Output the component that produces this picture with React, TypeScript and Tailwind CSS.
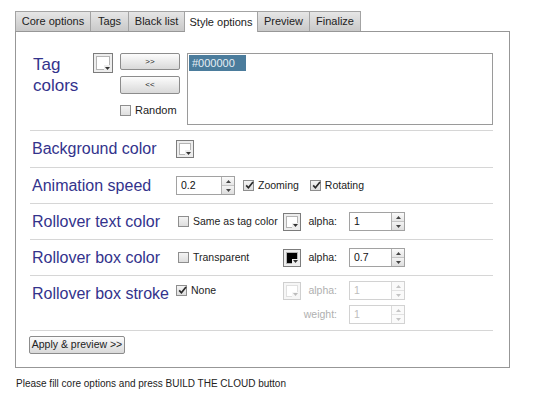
import React from "react";

const font = "font-['Liberation_Sans',Arial,sans-serif]";

function Checkbox({ checked = false }: { checked?: boolean }) {
  return (
    <span className="relative inline-block w-[11px] h-[11px] shrink-0 border border-[#8e8e8e] bg-gradient-to-b from-[#f4f4f4] to-[#dedede]">
      {checked && (
        <svg viewBox="0 0 11 11" className="absolute -top-[1px] left-0 w-[11px] h-[11px]">
          <path d="M2.2 5.4 L4.4 7.8 L9 2" fill="none" stroke="#2a2a2a" strokeWidth="1.7" />
        </svg>
      )}
    </span>
  );
}

function Swatch({ color = "#ffffff", size = 18, disabled = false }: { color?: string; size?: number; disabled?: boolean }) {
  return (
    <div
      className={`relative shrink-0 p-[2px] border ${disabled ? "border-[#cfcfcf] bg-[#f6f6f6]" : "border-[#7c7c7c] bg-[#ededed]"}`}
      style={{ width: size, height: size }}
    >
      <div className={`w-full h-full border ${disabled ? "border-[#e0e0e0]" : "border-[#b4b4b4]"}`} style={{ background: color }} />
      <div
        className={`absolute right-[1px] bottom-[1px] w-[7px] h-[6px] flex items-center justify-center ${disabled ? "bg-[#f6f6f6]" : "bg-[#ededed]"}`}
      >
        <svg viewBox="0 0 5 3" className="w-[5px] h-[3px]">
          <path d="M0 0 H5 L2.5 3 Z" fill={disabled ? "#bbb" : "#333"} />
        </svg>
      </div>
    </div>
  );
}

function Spinner({ value, width = 56, disabled = false }: { value: string; width?: number; disabled?: boolean }) {
  const arrow = disabled ? "#c4c4c4" : "#444";
  return (
    <div
      className={`flex h-[19px] shrink-0 border bg-white ${disabled ? "border-[#d2d2d2]" : "border-[#a2a2a2]"}`}
      style={{ width }}
    >
      <div className={`flex-1 flex items-center pl-[4px] text-[10.5px] ${disabled ? "text-[#bdbdbd]" : "text-[#111]"}`}>
        {value}
      </div>
      <div className={`w-[13px] flex flex-col border-l ${disabled ? "border-[#dadada]" : "border-[#b0b0b0]"}`}>
        <div className={`flex-1 flex items-center justify-center border-b ${disabled ? "border-[#e2e2e2] bg-[#fafafa]" : "border-[#c4c4c4] bg-gradient-to-b from-[#fbfbfb] to-[#e6e6e6]"}`}>
          <svg viewBox="0 0 5 3" className="w-[5px] h-[3px]">
            <path d="M0 3 H5 L2.5 0 Z" fill={arrow} />
          </svg>
        </div>
        <div className={`flex-1 flex items-center justify-center ${disabled ? "bg-[#fafafa]" : "bg-gradient-to-b from-[#f3f3f3] to-[#dedede]"}`}>
          <svg viewBox="0 0 5 3" className="w-[5px] h-[3px]">
            <path d="M0 0 H5 L2.5 3 Z" fill={arrow} />
          </svg>
        </div>
      </div>
    </div>
  );
}

function Button({ children, className = "" }: { children: React.ReactNode; className?: string }) {
  return (
    <div
      className={`flex items-center justify-center border border-[#8c8c8c] rounded-[2px] bg-gradient-to-b from-[#fcfcfc] to-[#d9d9d9] text-[#222] ${className}`}
    >
      {children}
    </div>
  );
}

const tabs = ["Core options", "Tags", "Black list", "Style options", "Preview", "Finalize"];
const tabWidths = ["w-[76px]", "w-[38px]", "w-[56px]", "w-[73px]", "w-[52px]", "w-[51px]"];

function Label({ children }: { children: React.ReactNode }) {
  return <div className="w-[146px] pl-[2px] text-[16px] leading-[20px] text-[#33338c] shrink-0">{children}</div>;
}

export default function App() {
  return (
    <div className={`w-[550px] h-[411px] bg-white pt-[11px] pl-[15px] ${font}`}>
      {/* Tabs */}
      <div className="flex h-[20px]">
        {tabs.map((t, i) => {
          const active = t === "Style options";
          return (
            <div
              key={t}
              className={`${tabWidths[i]} flex items-center justify-center text-[11px] text-[#222] border-t border-r border-[#a3a3a3] ${i === 0 ? "border-l" : ""} ${
                active ? "relative z-10 h-[21px] bg-white" : "h-[20px] bg-gradient-to-b from-[#e6e6e6] to-[#c9c9c9]"
              }`}
            >
              {t}
            </div>
          );
        })}
      </div>

      {/* Panel */}
      <div className="w-[495px] h-[337px] border border-[#979797]">
        <div className="ml-[14px] w-[463px]">
          {/* Tag colors */}
          <div className="flex pt-[21px] pb-[5px] border-b border-[#d6d6d6]">
            <div className="w-[63px] pl-[3px] pt-[1px] text-[17px] leading-[21px] text-[#33338c]">
              Tag
              <br />
              colors
            </div>
            <Swatch size={20} />
            <div className="ml-[7px] w-[60px] flex flex-col">
              <Button className="h-[17px] text-[8px]">&gt;&gt;</Button>
              <Button className="h-[18px] mt-[6px] text-[8px]">&lt;&lt;</Button>
              <div className="flex items-center gap-[4px] mt-[8px] text-[11px] text-[#222]">
                <Checkbox />
                Random
              </div>
            </div>
            <div className="ml-[7px] flex-1 h-[72px] border border-[#9a9a9a] p-[1px]">
              <div className="w-[57px] h-[16px] bg-[#4b7c9c] text-[#e6eef4] text-[11px] flex items-center pl-[3px]">#000000</div>
            </div>
          </div>

          {/* Background color */}
          <div className="flex items-center h-[37px] border-b border-[#d6d6d6]">
            <Label>Background color</Label>
            <Swatch />
          </div>

          {/* Animation speed */}
          <div className="flex items-center h-[36px] border-b border-[#d6d6d6]">
            <Label>Animation speed</Label>
            <Spinner value="0.2" width={59} />
            <div className="flex items-center gap-[4px] ml-[8px] text-[10.5px] text-[#222]">
              <Checkbox checked />
              Zooming
            </div>
            <div className="flex items-center gap-[4px] ml-[11px] text-[10.5px] text-[#222]">
              <Checkbox checked />
              Rotating
            </div>
          </div>

          {/* Rollover text color */}
          <div className="flex items-center h-[36px] border-b border-[#d6d6d6]">
            <Label>Rollover text color</Label>
            <div className="w-[107px] flex items-center gap-[4px] pl-[2px] text-[10.5px] text-[#222]">
              <Checkbox />
              Same as tag color
            </div>
            <Swatch />
            <div className="w-[36px] text-right text-[10.5px] text-[#222]">alpha:</div>
            <div className="ml-[12px]">
              <Spinner value="1" />
            </div>
          </div>

          {/* Rollover box color */}
          <div className="flex items-center h-[36px] border-b border-[#d6d6d6]">
            <Label>Rollover box color</Label>
            <div className="w-[107px] flex items-center gap-[4px] pl-[2px] text-[10.5px] text-[#222]">
              <Checkbox />
              Transparent
            </div>
            <Swatch color="#000000" />
            <div className="w-[36px] text-right text-[10.5px] text-[#222]">alpha:</div>
            <div className="ml-[12px]">
              <Spinner value="0.7" />
            </div>
          </div>

          {/* Rollover box stroke */}
          <div className="flex items-start h-[55px] pt-[5px] border-b border-[#d6d6d6]">
            <div className="pt-[3px]">
              <Label>Rollover box stroke</Label>
            </div>
            <div className="flex flex-col gap-[5px]">
              <div className="flex items-center h-[19px]">
                <div className="w-[107px] flex items-center gap-[4px] text-[10.5px] text-[#222]">
                  <Checkbox checked />
                  None
                </div>
                <Swatch disabled />
                <div className="w-[36px] text-right text-[10.5px] text-[#b0b0b0]">alpha:</div>
                <div className="ml-[12px]">
                  <Spinner value="1" disabled />
                </div>
              </div>
              <div className="flex items-center h-[19px]">
                <div className="w-[161px] text-right text-[10.5px] text-[#b0b0b0]">weight:</div>
                <div className="ml-[12px]">
                  <Spinner value="1" disabled />
                </div>
              </div>
            </div>
          </div>

          {/* Apply */}
          <div className="pt-[5px] -ml-[1px]">
            <Button className="w-[96px] h-[18px] text-[10.5px]">Apply &amp; preview &gt;&gt;</Button>
          </div>
        </div>
      </div>

      <div className="mt-[8px] ml-[1px] text-[10px] text-[#222]">Please fill core options and press BUILD THE CLOUD button</div>
    </div>
  );
}
